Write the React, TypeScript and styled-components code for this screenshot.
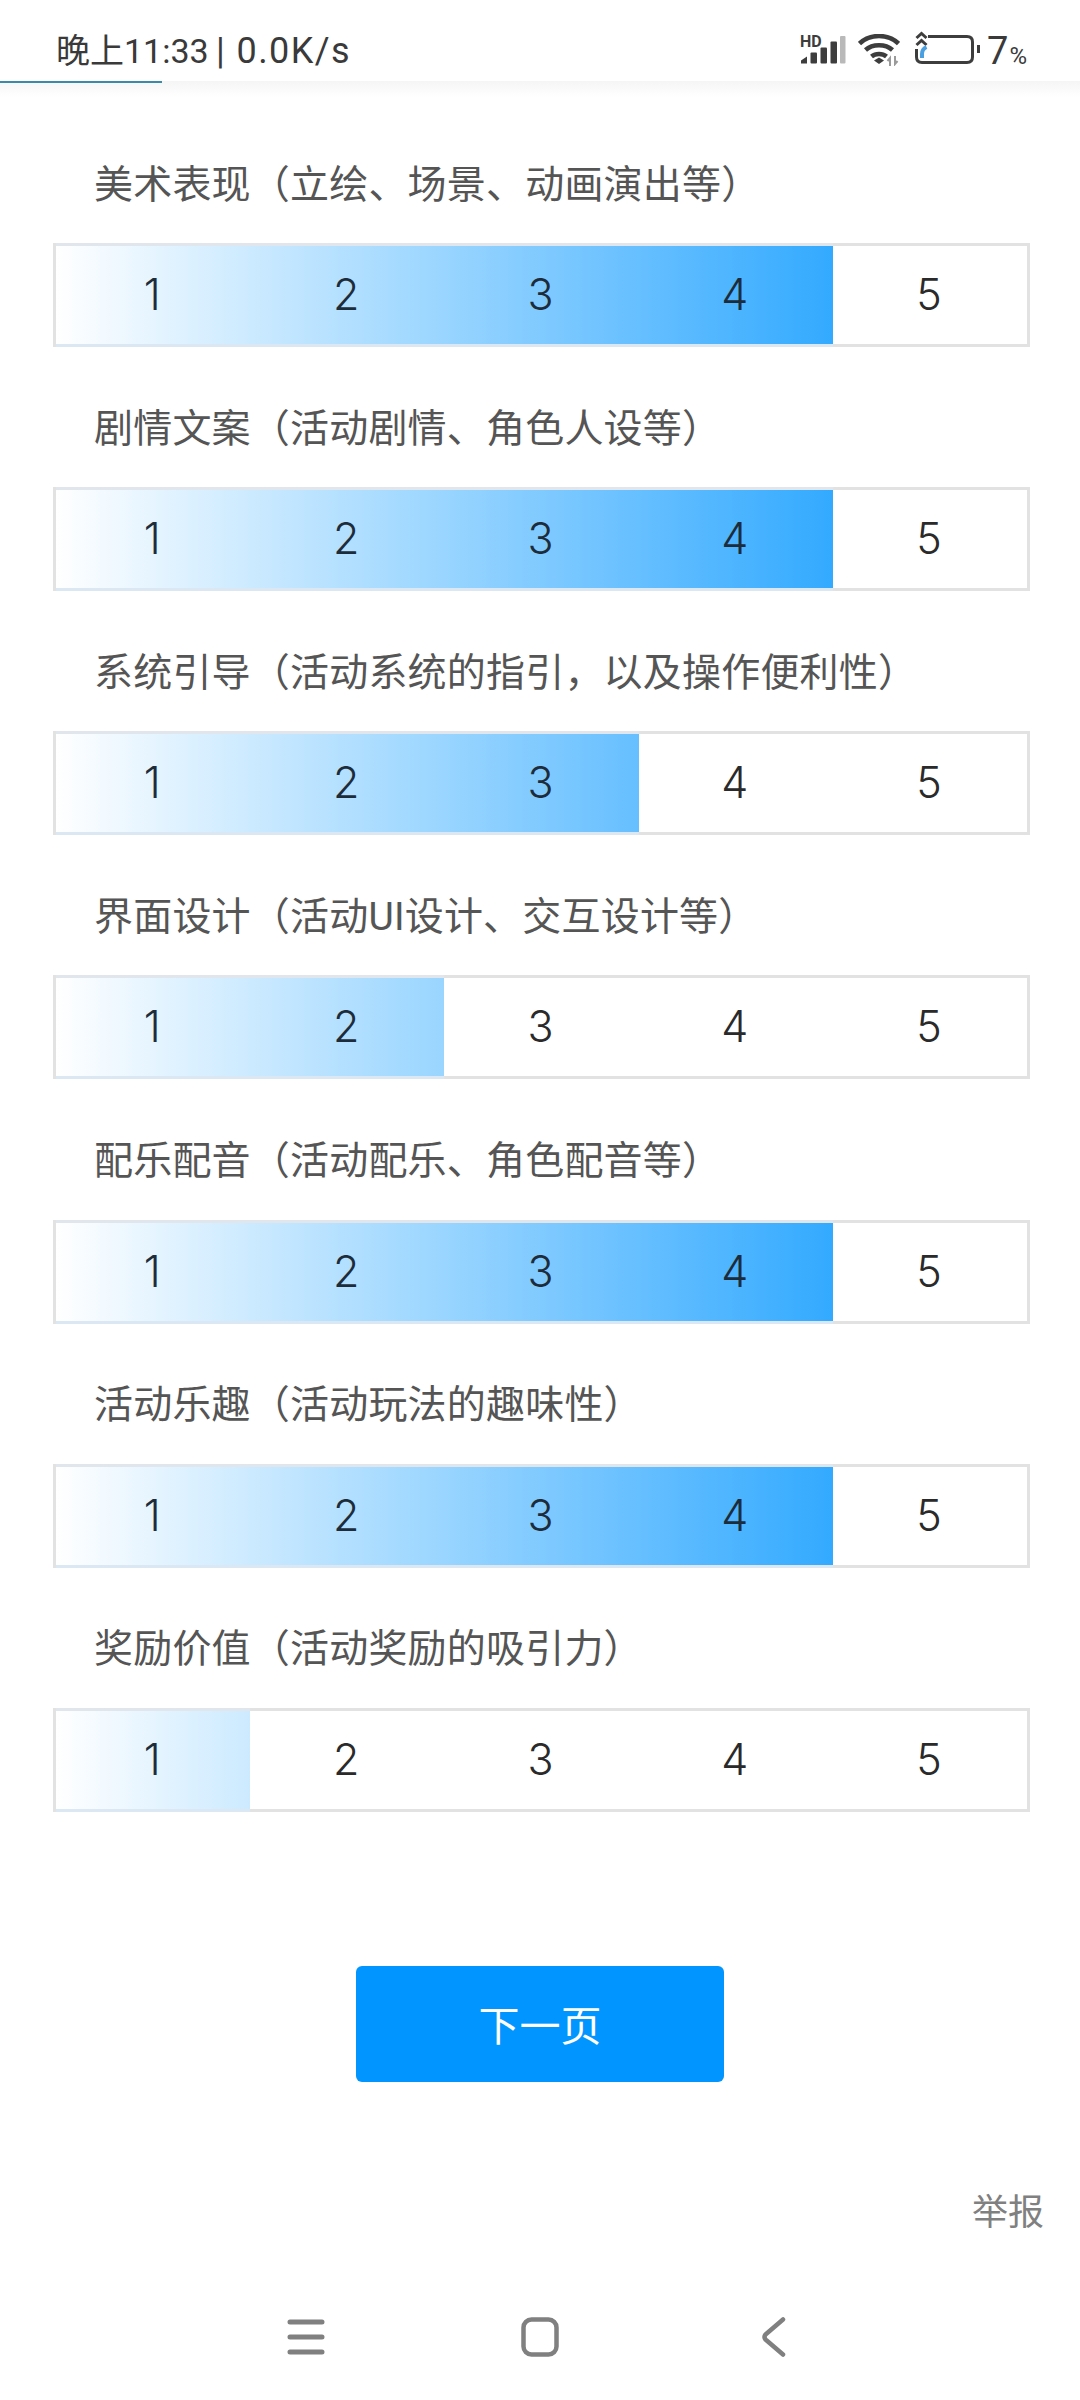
import React from 'react';
import styled, { createGlobalStyle } from 'styled-components';

const CJK = `Roboto, "Noto Sans CJK SC", sans-serif`;

const GlobalStyle = createGlobalStyle`
  html, body {
    margin: 0;
    background: #ffffff;
  }
`;

const Screen = styled.div`
  width: 1080px;
  height: 2400px;
  display: flex;
  flex-direction: column;
  background: #ffffff;
  font-family: ${CJK};
  overflow: hidden;
`;

const StatusBar = styled.header`
  height: 81px;
  padding: 34px 53px 0 56px;
  box-sizing: border-box;
  display: flex;
  align-items: flex-start;
  justify-content: space-between;
  color: #3a3a3a;
`;

const Clock = styled.span`
  font-size: 34px;
  line-height: 40px;
  margin-top: -3px;
`;

const Speed = styled.span`
  font-size: 36px;
  letter-spacing: 1.4px;
  margin-left: -3px;
`;

const StatusIcons = styled.div`
  display: flex;
  align-items: flex-start;
`;

const Percent = styled.span`
  margin-left: 6px;
  font-size: 38px;
  line-height: 44px;
  margin-top: -5px;
  color: #3a3a3a;

  & small {
    font-size: 24px;
    margin-left: 1px;
  }
`;

const LoadShadow = styled.div`
  height: 16px;
  background: linear-gradient(180deg, #f5f5f5, #ffffff);
`;

const LoadLine = styled.div`
  width: 162px;
  height: 2px;
  background: #3a8aa8;
`;

const Survey = styled.main`
  padding: 57px 50px 0 53px;
  display: flex;
  flex-direction: column;
  gap: 51.15px;
`;

const Question = styled.section`
  display: flex;
  flex-direction: column;
  gap: 29.5px;
`;

const Label = styled.div`
  padding: 1.5px 0 0 41px;
  font-size: 39px;
  letter-spacing: 0.2px;
  line-height: 58px;
  color: #555555;
`;

const Track = styled.div`
  display: grid;
  grid-template-columns: repeat(5, 1fr);
  height: 104px;
  box-sizing: border-box;
  border-left: 3px solid #e2e2e2;
  border-right: 3px solid #e2e2e2;
`;

const mix = (t: number) => {
  const r = Math.round(255 * (1 - t));
  const g = Math.round(255 - (255 - 149) * t);
  return `rgb(${r}, ${g}, 255)`;
};

const Cell = styled.div<{ $index: number; $value: number }>`
  display: flex;
  align-items: center;
  justify-content: center;
  padding: 0 2px 2px 0;
  border-top: 3px solid ${(p) => (p.$index < p.$value ? '#e0e6ec' : '#e2e2e2')};
  border-bottom: 3px solid ${(p) => (p.$index < p.$value ? '#dbe8f3' : '#e2e2e2')};
  background: ${(p) =>
    p.$index < p.$value
      ? `linear-gradient(90deg, ${mix(p.$index / 5)}, ${mix((p.$index + 1) / 5)})`
      : '#ffffff'};
  font-family: Inter, sans-serif;
  font-weight: 350;
  font-size: 43px;
  color: ${(p) => (p.$index < p.$value ? '#1d2c3a' : '#2a2a2a')};
`;

const NextButton = styled.button`
  display: block;
  width: 368px;
  height: 116px;
  margin: 154.5px auto 0;
  padding: 0 0 3px;
  border: 0;
  border-radius: 6px;
  background: #0095ff;
  color: #ffffff;
  font-family: ${CJK};
  font-size: 41px;
`;

const Report = styled.div`
  margin-top: 109px;
  padding-right: 36px;
  text-align: right;
  font-size: 36px;
  line-height: 44px;
  color: #808080;
`;

const NavBar = styled.nav`
  margin-top: auto;
  height: 120px;
  box-sizing: border-box;
  padding-bottom: 6px;
  display: flex;
  align-items: center;
  justify-content: center;
`;

const NavSlot = styled.div`
  width: 234px;
  display: flex;
  justify-content: center;
`;

const SignalIcon = () => (
  <svg width="46" height="30" viewBox="0 0 46 30" fill="#3d3d3d" overflow="visible">
    <text x="0" y="12.5" fontFamily="Roboto, sans-serif" fontWeight="700" fontSize="16">HD</text>
    <path d="M1 29.5v-3l6-4v7z" />
    <rect x="10.5" y="18.5" width="6.5" height="11" rx="1" />
    <rect x="20.5" y="13.5" width="6.5" height="16" rx="1" />
    <rect x="30.5" y="7.5" width="6.5" height="22" rx="1" />
    <rect x="40" y="2" width="5.5" height="27.5" rx="1" fill="#b9b9b9" />
  </svg>
);

const WifiIcon = () => (
  <svg width="42" height="32" viewBox="0 0 42 32" fill="none" stroke="#3d3d3d" strokeWidth="4.5" style={{ marginLeft: 12 }}>
    <path d="M1.5 9.5C12 -0.5 30 -0.5 40.5 9.5" />
    <path d="M7.5 16C14.5 9.5 27.5 9.5 34.5 16" />
    <path d="M13.5 22.5C17.5 19 24.5 19 28.5 22.5" />
    <path d="M16 26.5L21 23.5l5 3-5 3.5z" fill="#3d3d3d" stroke="none" />
    <path d="M32 32v-8l-2.5 3M37 22v8l2.5-3" stroke="#9a9a9a" strokeWidth="2" />
  </svg>
);

const BatteryIcon = () => (
  <svg width="66" height="36" viewBox="0 0 66 36" fill="none" stroke="#3d3d3d" strokeWidth="3" style={{ marginLeft: 15, marginTop: -4 }}>
    <path d="M13 6.5H52Q57.5 6.5 57.5 12V27Q57.5 32.5 52 32.5H7Q1.5 32.5 1.5 27V19" />
    <path d="M1.5 8L6.5 3.5 11.5 8" />
    <path d="M1.5 15L6.5 10.5 11.5 15" />
    <path d="M11.5 17Q7 19 7 24V28" stroke="#4a9fe0" strokeWidth="4" />
    <rect x="62" y="15" width="3" height="8" fill="#3d3d3d" stroke="none" />
  </svg>
);

const MenuIcon = () => (
  <svg width="38" height="36" viewBox="0 0 38 36" stroke="#808080" strokeWidth="5" strokeLinecap="round">
    <path d="M3 3H35M3 18H35M3 33H35" />
  </svg>
);

const HomeIcon = () => (
  <svg width="38" height="40" viewBox="0 0 38 40" fill="none" stroke="#808080" strokeWidth="4.5">
    <rect x="2.5" y="2.5" width="33" height="35" rx="8" />
  </svg>
);

const BackIcon = () => (
  <svg width="24" height="40" viewBox="0 0 24 40" fill="none" stroke="#808080" strokeWidth="4.5" strokeLinecap="round" strokeLinejoin="round">
    <path d="M21 2.5L3.5 17.5Q1.5 20 3.5 22.5L21 37.5" />
  </svg>
);

const questions = [
  { label: '美术表现（立绘、场景、动画演出等）', value: 4 },
  { label: '剧情文案（活动剧情、角色人设等）', value: 4 },
  { label: '系统引导（活动系统的指引，以及操作便利性）', value: 3 },
  { label: '界面设计（活动UI设计、交互设计等）', value: 2 },
  { label: '配乐配音（活动配乐、角色配音等）', value: 4 },
  { label: '活动乐趣（活动玩法的趣味性）', value: 4 },
  { label: '奖励价值（活动奖励的吸引力）', value: 1 },
];

export default function App() {
  return (
    <>
      <GlobalStyle />
      <Screen>
        <StatusBar>
          <Clock>
            晚上11:33
            <Speed> | 0.0K/s</Speed>
          </Clock>
          <StatusIcons>
            <SignalIcon />
            <WifiIcon />
            <BatteryIcon />
            <Percent>
              7<small>%</small>
            </Percent>
          </StatusIcons>
        </StatusBar>
        <LoadShadow>
          <LoadLine />
        </LoadShadow>
        <Survey>
          {questions.map((q) => (
            <Question key={q.label}>
              <Label>{q.label}</Label>
              <Track>
                {[0, 1, 2, 3, 4].map((i) => (
                  <Cell key={i} $index={i} $value={q.value}>
                    {i + 1}
                  </Cell>
                ))}
              </Track>
            </Question>
          ))}
        </Survey>
        <NextButton>下一页</NextButton>
        <Report>举报</Report>
        <NavBar>
          <NavSlot>
            <MenuIcon />
          </NavSlot>
          <NavSlot>
            <HomeIcon />
          </NavSlot>
          <NavSlot>
            <BackIcon />
          </NavSlot>
        </NavBar>
      </Screen>
    </>
  );
}
